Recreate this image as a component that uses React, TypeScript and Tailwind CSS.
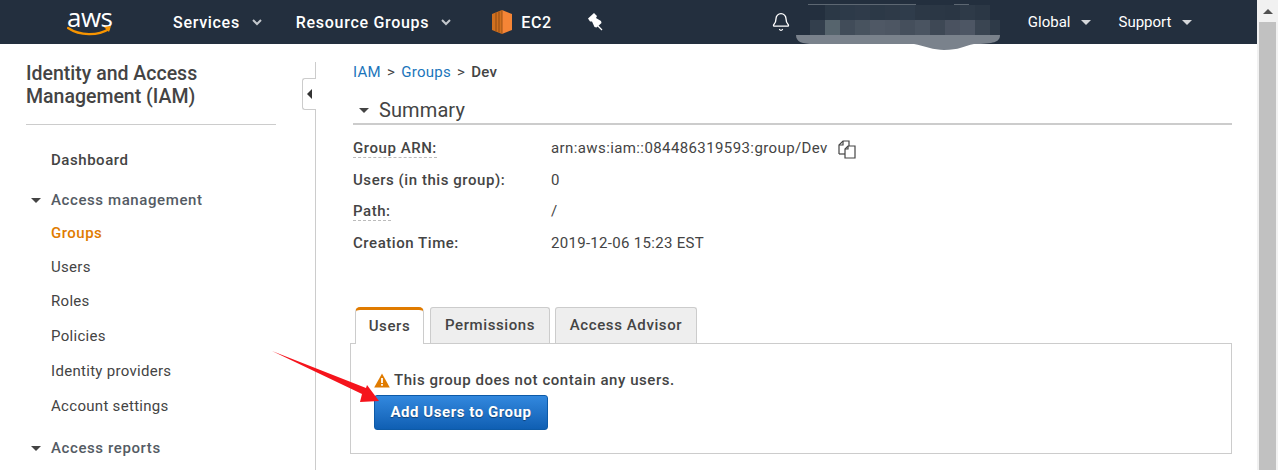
import { FC } from "react";
import { Bell } from "lucide-react";

const Caret: FC<{ className?: string }> = ({ className = "" }) => (
  <span className={`inline-block border-x-[5px] border-t-[5px] border-x-transparent ${className}`} />
);

const NavCaret: FC<{ className?: string }> = ({ className = "" }) => (
  <svg width="10" height="7" viewBox="0 0 10 7" className={className}>
    <path d="M1 1l4 4 4-4" fill="none" stroke="#c3c7cc" strokeWidth="2" />
  </svg>
);

const AwsLogo: FC = () => (
  <div className="flex flex-col w-[50px] ml-[67px] pb-[8px] shrink-0">
    <span className="text-[26px] leading-[36px] tracking-[-0.5px] text-white font-['Open_Sans',sans-serif]">aws</span>
    <svg width="46" height="12" viewBox="0 0 46 12" className="-mt-[10px]">
      <path d="M1 3c12 8 30 8 41 1" fill="none" stroke="#f79400" strokeWidth="2.2" strokeLinecap="round" />
      <path d="M37 2l7-1-2 6z" fill="#f79400" />
    </svg>
  </div>
);

const Ec2Icon: FC = () => (
  <svg width="20" height="24" viewBox="0 0 20 24" className="shrink-0 block">
    <path d="M10 0l10 4v16l-10 4z" fill="#f58536" />
    <path d="M10 0L0 4v16l10 4z" fill="#d0701f" />
    <path d="M4 2.5v19M7 1.5v21" stroke="#8f4a12" strokeWidth="1" />
    <path d="M10 0v24" stroke="#9d5316" strokeWidth="1" />
  </svg>
);

const PinIcon: FC = () => (
  <svg width="15" height="18" viewBox="0 0 15 18" className="ml-[36px] shrink-0">
    <path d="M0 5.5L6 0l3 3-1 2 5 3 .5 2-5 4.5-2-.5L4 8.5H2z" fill="white" />
    <path d="M9 12l5 5" stroke="white" strokeWidth="1.3" />
  </svg>
);

// the smudge someone painted over the account name
const Smudge: FC = () => {
  const top = ["#2b3846", "#2d3a49", "#2f3b4a", "#2c3947", "#2e3a48", "#2f3c4b", "#2c3846", "#2b3745", "#2a3644", "#2e3a48", "#2b3745"];
  const mid = ["#333f4d", "#56646d", "#414c59", "#48535f", "#4f5865", "#4d5663", "#454f5c", "#4a5461", "#3e4855", "#4a5260", "#4d5664", "#3a4552", "#2e3a48"];
  return (
    <svg width="212" height="48" viewBox="0 0 212 48" className="absolute left-[794px] top-[4px]">
      <path d="M2 31H206C206 38 200 40 180 40 170 42 165 46 150 46 140 46 130 42 120 40H20C8 40 2 38 2 31z" fill="#7a828c" />
      <path d="M14 0.5H122M160 0.5H175" stroke="#5d6772" />
      {top.map((c, i) => (
        <rect key={i} x={31 + i * 15} y={1} width={15} height={15} fill={c} />
      ))}
      {mid.map((c, i) => (
        <rect key={i} x={16 + i * 15} y={16} width={i === 12 ? 10 : 15} height={15} fill={c} />
      ))}
    </svg>
  );
};

const TopNav: FC = () => (
  <header className="relative h-[44px] bg-[#232f3e] flex items-center shrink-0 text-white font-medium tracking-[0.7px]">
    <AwsLogo />
    <span className="ml-[56px] pt-[1px] text-[16px]">Services</span>
    <NavCaret className="ml-[12px]" />
    <span className="ml-[34px] pt-[1px] text-[16px]">Resource Groups</span>
    <NavCaret className="ml-[12px]" />
    <span className="ml-[41px]"><Ec2Icon /></span>
    <span className="ml-[9px] pt-[1px] text-[16px]">EC2</span>
    <PinIcon />
    <Bell size={20} strokeWidth={1.6} className="ml-[168px]" />
    <span className="ml-[237px] pt-[1px] text-[15px] font-normal tracking-normal">Global</span>
    <Caret className="ml-[10px] border-x-[4px] border-t-[#d5d7da]" />
    <span className="ml-[28px] pt-[1px] text-[15px] font-normal tracking-normal">Support</span>
    <Caret className="ml-[11px] border-x-[4px] border-t-[#d5d7da]" />
    <Smudge />
  </header>
);

const navLinks = [
  { label: "Groups", h: "h-[34px]", className: "font-medium text-[#e07b00] tracking-[0.5px]" },
  { label: "Users", h: "h-[34px]", className: "" },
  { label: "Roles", h: "h-[35px]", className: "" },
  { label: "Policies", h: "h-[35px]", className: "" },
  { label: "Identity providers", h: "h-[35px]", className: "" },
  { label: "Account settings", h: "h-[34px]", className: "" },
];

const SectionHead: FC<{ label: string; className: string }> = ({ label, className }) => (
  <div className={`flex items-center text-[15px] font-medium tracking-[0.6px] text-[#545b64] ${className}`}>
    <Caret className="ml-[5px] mr-[10px] border-t-[#444]" />
    {label}
  </div>
);

const Sidebar: FC = () => (
  <aside className="w-[315px] shrink-0 pl-[26px] pr-[39px] pt-[18px] text-[15px] tracking-[0.3px] text-[#444]">
    <h2 className="text-[19.5px] leading-[23px] tracking-normal font-medium text-[#444] pb-[16px] border-b border-[#ccc]">
      Identity and Access Management (IAM)
    </h2>
    <div className="ml-[25px] mt-[25px] h-[20px] flex items-center font-medium tracking-[0.55px]">Dashboard</div>
    <SectionHead label="Access management" className="mt-[20px] h-[20px]" />
    <nav className="mt-[6px] ml-[25px] flex flex-col">
      {navLinks.map((l) => (
        <a key={l.label} className={`flex items-center ${l.h} ${l.className}`}>{l.label}</a>
      ))}
    </nav>
    <SectionHead label="Access reports" className="mt-[15px] h-[20px]" />
  </aside>
);

const Label: FC<{ text: string; dashed?: boolean }> = ({ text, dashed }) => (
  <span className={`font-medium tracking-[0.55px] ${dashed ? "border-b border-dashed border-[#bbb] leading-[20px]" : ""}`}>{text}</span>
);

const rows = [
  { label: "Users (in this group):", value: "0", dashed: false },
  { label: "Path:", value: "/", dashed: true },
  { label: "Creation Time:", value: "2019-12-06 15:23 EST", dashed: false },
];

const CopyIcon: FC = () => (
  <svg width="18" height="20" viewBox="0 0 18 20" className="ml-[10px] shrink-0" fill="none" stroke="#444" strokeWidth="1.2">
    <path d="M1 15V6l4-4h6v5" />
    <path d="M5 2v4H1" />
    <path d="M1 15h6" />
    <path d="M7 19V10l3-3h7v12z" fill="white" />
    <path d="M10 7v3H7" />
  </svg>
);

const Summary: FC = () => (
  <section>
    <div className="mt-[15px] flex items-center h-[26px] ml-[6px] text-[20px] tracking-[0.1px] text-[#444] font-normal">
      <Caret className="mr-[10px] border-t-[#444]" />
      Summary
    </div>
    <div className="border-t-2 border-[#ccc]" />
    <dl className="mt-[8px] text-[15px] text-[#444]">
      <div className="flex items-center h-[31px]">
        <dt className="w-[198px] shrink-0"><Label text="Group ARN:" dashed /></dt>
        <dd className="flex items-center tracking-[0.4px]">arn:aws:iam::084486319593:group/Dev<CopyIcon /></dd>
      </div>
      {rows.map((r) => (
        <div key={r.label} className="flex items-center h-[31.5px]">
          <dt className="w-[198px] shrink-0"><Label text={r.label} dashed={r.dashed} /></dt>
          <dd className="tracking-[0.3px]">{r.value}</dd>
        </div>
      ))}
    </dl>
  </section>
);

const Tabs: FC = () => (
  <section className="mt-[47px] -ml-[3px]">
    <div className="flex items-end h-[37px] pl-[5px] text-[15px] font-medium tracking-[0.6px] text-[#444]">
      <div className="relative z-10 w-[69px] h-[37px] -mb-px flex items-center justify-center bg-white rounded-t-[5px] border-x border-[#ccc] border-t-[3px] border-t-[#e07b00]">Users</div>
      <div className="ml-[6px] w-[120px] h-[36px] flex items-center justify-center bg-[#eee] rounded-t-[3px] border-x border-t border-[#ccc]">Permissions</div>
      <div className="ml-[5px] w-[142px] h-[36px] flex items-center justify-center bg-[#eee] rounded-t-[3px] border-x border-t border-[#ccc]">Access Advisor</div>
    </div>
    <div className="h-[111px] border border-[#ccc] pl-[23px] pt-[27px] text-[15px] font-medium tracking-[0.55px] text-[#444]">
      <div className="flex items-center h-[20px] gap-[4px]">
        <svg width="16" height="15" viewBox="0 0 16 15">
          <path d="M8 .5L15.8 14.5H.2z" fill="#e07b00" />
          <path d="M7.1 5h1.8v5H7.1zM7.1 11h1.8v1.8H7.1z" fill="white" />
        </svg>
        This group does not contain any users.
      </div>
      <button className="mt-[4px] w-[174px] h-[35px] rounded-[3px] bg-gradient-to-b from-[#3288de] to-[#0f5fb3] border border-[#0d5aa7] text-white font-bold text-[15px] [text-shadow:0_1px_1px_rgba(0,0,0,0.4)]">
        Add Users to Group
      </button>
    </div>
  </section>
);

const Main: FC = () => (
  <main className="relative flex-1 mt-[18px] border-l border-[#ccc] pl-[37px] pr-[25px]">
    <button className="absolute left-[-14px] top-[16px] w-[14px] h-[32px] bg-white border border-r-0 border-[#ccc] rounded-l-[3px] flex items-center justify-center">
      <span className="border-y-[5px] border-r-[5px] border-y-transparent border-r-[#333]" />
    </button>
    <div className="h-[20px] flex items-center text-[15px] tracking-[0.3px] text-[#444]">
      <a className="text-[#1b75bb]">IAM</a>
      <span className="mx-[6px]">&gt;</span>
      <a className="text-[#1b75bb]">Groups</a>
      <span className="mx-[6px]">&gt;</span>
      <span className="font-medium">Dev</span>
    </div>
    <Summary />
    <Tabs />
  </main>
);

const Scrollbar: FC = () => (
  <div className="w-[21px] shrink-0 bg-[#f1f1f1] flex flex-col items-center">
    <span className="mt-[9px] border-x-[5px] border-b-[5px] border-x-transparent border-b-[#505050]" />
    <div className="mt-[8px] w-[17px] flex-1 bg-[#c1c1c1]" />
  </div>
);

const ScreenshotArrow: FC = () => (
  <svg width="120" height="60" viewBox="0 0 120 60" className="absolute left-[270px] top-[348px]">
    <path d="M2 3L96 40 97 37 109 53 90 54 92 46z" fill="#f5141c" />
  </svg>
);

export default function App() {
  return (
    <div className="relative flex w-[1278px] h-[470px] overflow-hidden bg-white font-['Roboto',sans-serif]">
      <div className="flex flex-col flex-1 min-w-0">
        <TopNav />
        <div className="flex flex-1 min-h-0">
          <Sidebar />
          <Main />
        </div>
      </div>
      <Scrollbar />
      <ScreenshotArrow />
    </div>
  );
}
